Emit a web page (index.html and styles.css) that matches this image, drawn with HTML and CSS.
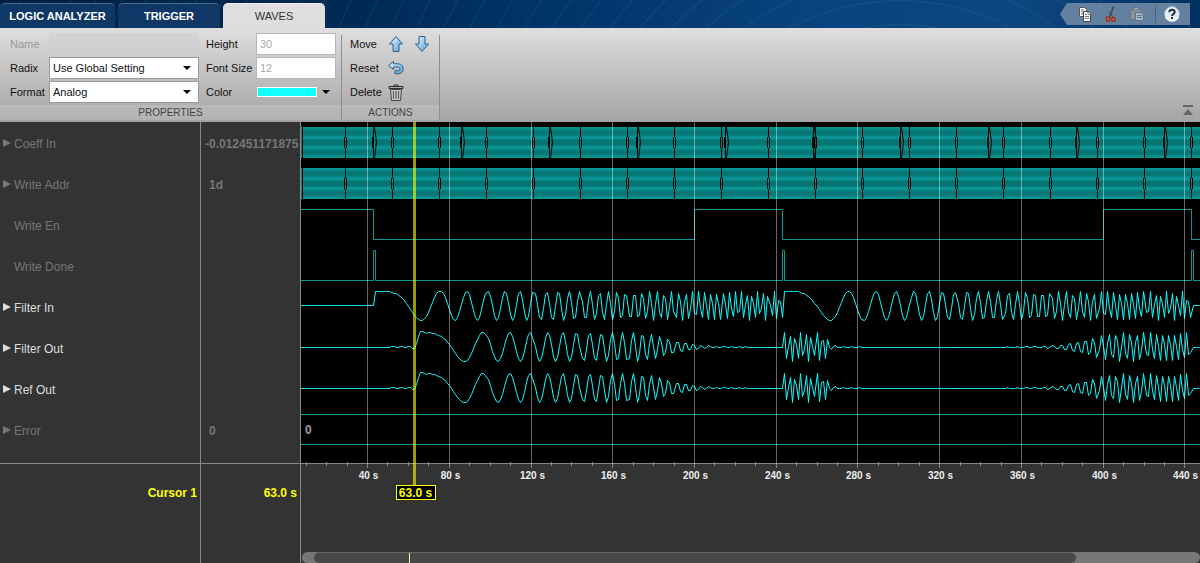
FILE: index.html
```
<!DOCTYPE html>
<html lang="en">
  <head>
    <meta charset="utf-8" />
    <title>Logic Analyzer</title>
    <link rel="stylesheet" href="styles.css">
  </head>
  <body>
    <header class="topbar">
      <nav class="tabs">
        <button class="tab">LOGIC ANALYZER</button>
        <button class="tab">TRIGGER</button>
        <button class="tab active">WAVES</button>
      </nav>
      <div class="quick">
        <button class="icon-btn" aria-label="Copy">
          <svg width="16" height="16" viewBox="0 0 16 16">
            <path d="M2.500 1.500h5l2 2v7h-7z" fill="#fff" stroke="#555" />
            <path d="M4 4h3M4 6h3M4 8h2" stroke="#777" />
            <path d="M6.500 5.500h5l2 2v8h-7z" fill="#fff" stroke="#444" />
            <path d="M11 5.500v3h3M8 8.500h2M8 10.500h4M8 12.500h4" fill="none" stroke="#777" />
          </svg>
        </button>
        <button class="icon-btn" aria-label="Cut">
          <svg width="16" height="16" viewBox="0 0 16 16" fill="none">
            <path d="M10.500 0L8 8l-2 3.500" stroke="#444" stroke-width="1.500" />
            <path d="M5.500 6L8 9l2 2" stroke="#555" stroke-width="1.200" />
            <ellipse cx="5" cy="13" rx="1.800" ry="2.200" stroke="#b03010" stroke-width="1.500" />
            <ellipse cx="10.500" cy="13.500" rx="1.800" ry="2" stroke="#b03010" stroke-width="1.500" />
          </svg>
        </button>
        <button class="icon-btn" aria-label="Paste" disabled>
          <svg width="16" height="16" viewBox="0 0 16 16">
            <path d="M1.500 3.500h11v10h-11z" fill="#8c929b" stroke="#67727f" />
            <path d="M4 4V2h2V1h2v1h2v2z" fill="#a9b5c2" stroke="#67727f" />
            <path d="M6.500 6.500h5l3 2v6h-8z" fill="#a3b4c6" stroke="#60758c" />
            <path d="M8 9.500h5M8 11.500h5" stroke="#60758c" />
          </svg>
        </button>
        <span class="divider"></span>
        <button class="icon-btn" aria-label="Help">
          <svg width="16" height="16" viewBox="0 0 16 16">
            <circle cx="8" cy="8" r="7.500" fill="#e4ebf1" stroke="#9eb4c8" />
            <path d="M2 11a7 7 0 0 0 12 0" fill="none" stroke="#fff" stroke-width="2" />
            <path d="M5.300 6.200c0-3.200 5.400-3.200 5.400-.2 0 2-2.600 1.900-2.600 4" fill="none" stroke="#1c2c3f" stroke-width="2" />
            <path d="M7 11h2v2H7z" fill="#1c2c3f" />
          </svg>
        </button>
      </div>
    </header>

    <section class="ribbon">
      <div class="group">
        <div class="fields">
          <label class="muted" for="name">Name</label>
          <input class="field" type="text" id="name" disabled />
          <label for="height">Height</label>
          <input class="field num" type="text" id="height" value="30" />
          <label for="radix">Radix</label>
          <select class="field" id="radix">
            <option>Use Global Setting</option>
          </select>
          <label for="fontSize">Font Size</label>
          <input class="field num" type="text" id="fontSize" value="12" />
          <label for="format">Format</label>
          <select class="field" id="format">
            <option>Analog</option>
          </select>
          <label for="color">Color</label>
          <button class="color" id="color"><span class="swatch"></span><span class="caret"></span></button>
        </div>
        <div class="group-title">PROPERTIES</div>
      </div>
      <div class="group">
        <div class="actions">
          <span>Move</span>
          <button class="icon-btn" aria-label="Move up">
            <svg width="16" height="18" viewBox="0 0 16 18">
              <path d="M8 1.500L14.500 9H11v7.500H5V9H1.500z" fill="url(#blue)" stroke="#2c5f8c" />
            </svg>
          </button>
          <button class="icon-btn" aria-label="Move down">
            <svg width="16" height="18" viewBox="0 0 16 18">
              <path d="M8 16.500L1.500 9H5V1.500h6V9h3.500z" fill="url(#blue)" stroke="#2c5f8c" />
            </svg>
          </button>
          <span>Reset</span>
          <button class="icon-btn" aria-label="Reset">
            <svg width="16" height="16" viewBox="0 0 16 16">
              <path d="M.5 5.500L5.500 1.500v2.300h4.800c6.500 0 6.500 10 0 10H7v-3h3c2.500 0 2.500-3.800 0-3.800H5.500v2.500z" fill="url(#blue)" stroke="#2c5f8c" />
            </svg>
          </button>
          <span></span>
          <span>Delete</span>
          <button class="icon-btn" aria-label="Delete">
            <svg width="16" height="17" viewBox="0 0 16 17">
              <path d="M6 2V1h4v1" fill="none" stroke="#333" />
              <path d="M2.500 5.500h11l-1 11h-9z" fill="#ccc" stroke="#444" />
              <path d="M1 2.500h14v2H1z" fill="#aaa" stroke="#333" />
              <path d="M5.500 7v8M8 7v8M10.500 7v8" stroke="#666" stroke-width="1.300" />
            </svg>
          </button>
        </div>
        <div class="group-title">ACTIONS</div>
      </div>
      <button class="collapse" aria-label="Collapse ribbon">
        <svg width="12" height="11" viewBox="0 0 12 11" fill="#666">
          <path d="M1 0h10v2H1zM6 4l5 6H1z" />
        </svg>
      </button>
    </section>

    <main class="viewer">
      <div class="names">
        <ul class="signals">
          <li><button class="expand" aria-label="Expand"></button>Coeff In</li>
          <li><button class="expand" aria-label="Expand"></button>Write Addr</li>
          <li class="leaf">Write En</li>
          <li class="leaf">Write Done</li>
          <li class="on"><button class="expand" aria-label="Expand"></button>Filter In</li>
          <li class="on"><button class="expand" aria-label="Expand"></button>Filter Out</li>
          <li class="on"><button class="expand" aria-label="Expand"></button>Ref Out</li>
          <li><button class="expand" aria-label="Expand"></button>Error</li>
        </ul>
        <div class="cursor-info">Cursor 1</div>
      </div>
      <div class="values">
        <ul class="signals">
          <li class="long">-0.012451171875</li>
          <li>1d</li>
          <li></li>
          <li></li>
          <li></li>
          <li></li>
          <li></li>
          <li>0</li>
        </ul>
        <div class="cursor-info">63.0 s</div>
      </div>
      <div class="waves">
        <svg class="plot" id="plot"></svg>
        <div class="track"><div class="thumb"><span class="mark"></span></div></div>
      </div>
    </main>

    <svg class="defs" width="0" height="0">
      <linearGradient id="blue" x1="0" y1="0" x2="1" y2="1">
        <stop offset="0" stop-color="#f0faff" />
        <stop offset="1" stop-color="#4f9bd0" />
      </linearGradient>
    </svg>

    <script src="plot.js"></script>
  </body>
</html>
```
FILE: styles.css
```
* {
  box-sizing: border-box;
}
body {
  margin: 0;
  min-height: 100vh;
  display: flex;
  flex-direction: column;
  font-family: "Liberation Sans", Arial, sans-serif;
  font-size: 11px;
  color: #111;
  background: #333;
}
button,
input,
select {
  font: inherit;
  color: inherit;
}
button {
  padding: 0;
  border: none;
  background: none;
}
.defs {
  position: absolute;
}

/* top bar */
.topbar {
  display: flex;
  justify-content: space-between;
  height: 28px;
  padding: 3px 10px 0 0;
  background:
    repeating-radial-gradient(circle at 75% 240px, transparent 0 22px, rgba(120, 180, 230, 0.08) 23px 24px),
    linear-gradient(90deg, #00203f 0%, #002a55 30%, #003468 45%, #0a4480 70%, #0d467f 85%, #003060 100%);
}
.tabs {
  display: flex;
  gap: 3px;
}
.tab {
  width: 102px;
  border-radius: 5px 5px 0 0;
  border-top: 1px solid #4a6c92;
  background: #0f3866;
  color: #fff;
  font-weight: bold;
}
.tab:first-child {
  width: 115px;
}
.tab.active {
  border-color: #eee;
  background: #dedede;
  color: #333;
  font-weight: normal;
}
.quick {
  display: flex;
  align-items: center;
  gap: 10px;
  width: 130px;
  height: 22px;
  padding-left: 17px;
  background: #63809f;
  clip-path: polygon(0 50%, 7px 0, 100% 0, 100% 100%, 7px 100%);
}
.icon-btn {
  display: flex;
  align-items: center;
  justify-content: center;
  width: 16px;
}
.icon-btn svg {
  flex: none;
}
.divider {
  width: 1px;
  height: 18px;
  margin-right: -2px;
  background: #4a6584;
}

/* ribbon */
.ribbon {
  display: flex;
  height: 94px;
  border-bottom: 2px solid #a4a4a4;
  background: linear-gradient(#dedede, #a5a5a5);
}
.group {
  display: flex;
  flex-direction: column;
  justify-content: space-between;
  width: 98px;
  border-right: 1px solid;
  border-image: linear-gradient(transparent 8%, #8e8e8e 9%) 1;
}
.group:first-child {
  width: 342px;
}
.fields {
  display: grid;
  grid-template-columns: 39px 150px 57px 80px;
  grid-template-rows: repeat(3, 24px);
  align-items: center;
  padding: 4px 5px 0 10px;
}
.fields label:nth-of-type(even) {
  padding-left: 7px;
  white-space: nowrap;
}
.muted {
  color: #999;
}
.field {
  width: 100%;
  height: 22px;
  padding: 0 3px;
  border: 1px solid #999;
  border-radius: 0;
  background: #fff;
}
.field:disabled {
  border-color: transparent;
  background: rgba(205, 205, 205, 0.5);
}
.field.num {
  border-color: #b5b5b5;
  color: #aaa;
}
select.field {
  appearance: none;
  background: #fff url("data:image/svg+xml,%3Csvg xmlns='http://www.w3.org/2000/svg' width='8' height='4'%3E%3Cpath d='M0 0h8L4 4z'/%3E%3C/svg%3E") no-repeat right 7px center;
}
.color {
  display: flex;
  align-items: center;
  gap: 5px;
  padding-left: 1px;
}
.swatch {
  width: 60px;
  height: 10px;
  border: 1px solid #fff;
  background: #1ff;
}
.caret {
  border: 4px solid transparent;
  border-top-color: #000;
  border-bottom: none;
}
.actions {
  display: grid;
  grid-template-columns: 38px 26px 16px;
  grid-template-rows: repeat(3, 24px);
  align-items: center;
  padding: 4px 9px 0 8px;
}
.group-title {
  height: 15px;
  line-height: 15px;
  text-align: center;
  font-size: 10px;
  color: #444;
  background: rgba(255, 255, 255, 0.15);
}
.collapse {
  align-self: flex-end;
  margin: 0 6px 2px auto;
}

/* viewer */
.viewer {
  flex: 1;
  display: flex;
}
.names,
.values {
  color: #777;
  font-size: 12px;
  border-right: 1px solid #888;
}
.names {
  width: 201px;
}
.values {
  width: 100px;
  font-weight: bold;
}
.signals {
  margin: 0;
  padding: 1px 0 12px;
  list-style: none;
  border-bottom: 1px solid #888;
}
.signals li {
  display: flex;
  align-items: center;
  height: 41px;
  padding-left: 3px;
}
.signals .leaf {
  padding-left: 14px;
}
.signals .on {
  color: #ddd;
}
.values li {
  padding-left: 8px;
  overflow: hidden;
  white-space: nowrap;
}
.values .long {
  padding-left: 4px;
}
.expand {
  margin: 0 3px 2px 0;
  border: 4px solid transparent;
  border-left: 8px solid currentColor;
  border-right: none;
}
.cursor-info {
  padding: 22px 3px 0 0;
  text-align: right;
  font-weight: bold;
  color: #ff0;
}
.waves {
  flex: 1;
  min-width: 0;
  display: flex;
  flex-direction: column;
  justify-content: space-between;
}
.plot {
  display: block;
  width: 100%;
  height: 380px;
}
.grid {
  stroke: #fff;
  stroke-opacity: 0.4;
}
.axis {
  stroke: #888;
}
.tick-label {
  fill: #eee;
  font-size: 10px;
  font-weight: bold;
  text-anchor: middle;
}
.analog {
  fill: none;
  stroke: #1ff;
}
.digital {
  fill: none;
  stroke: #0a9896;
}
.gap {
  fill: none;
  stroke: #000;
}
.bus-value {
  fill: #999;
  font-size: 12px;
  font-weight: bold;
}
.cursor-line {
  fill: #ff0;
  fill-opacity: 0.6;
}
.cursor-box {
  fill: #000;
  stroke: #ff0;
}
.cursor-text {
  fill: #ff0;
  font-size: 12px;
  font-weight: bold;
  text-anchor: middle;
}
.track {
  height: 11px;
  margin-left: 1px;
  padding-left: 12px;
  border-radius: 6px;
  background: #777;
}
.thumb {
  width: 86%;
  height: 100%;
  padding-left: 95px;
  border-top: 1px solid #666;
  border-radius: 6px;
  background: #484848;
}
.mark {
  display: block;
  width: 1px;
  height: 100%;
  background: #ff8;
}
```
FILE: plot.js
```
const plot = document.getElementById("plot");
const width = plot.clientWidth;
const plotHeight = 341;
const scale = 2.0435;
const endTime = Math.ceil(width / scale) + 10;

// seconds -> pixels
const px = (t) => t * scale - 15.3;
const snap = (t) => Math.floor(px(t) + 0.1) + 0.5;

const line = (cls, x1, y1, x2, y2) =>
  `<path class="${cls}" d="M${x1} ${y1}L${x2} ${y2}"/>`;

// chirp, restarted every 200 s
function filterIn(t) {
  if (t < 44 || t >= 444) return 0;
  const n = (t - 44) % 200;
  return Math.cos((Math.PI * n * n) / 500);
}

// half band FIR, low pass first and high pass after 243 s
const taps = 43;
const mid = (taps - 1) / 2;
function coeff(k, highPass) {
  const m = k - mid;
  const sinc = m === 0 ? 0.5 : Math.sin((Math.PI * m) / 2) / (Math.PI * m);
  const win = 0.54 - 0.46 * Math.cos((2 * Math.PI * k) / (taps - 1));
  return highPass ? (m === 0 ? 1 : 0) - sinc * win : sinc * win;
}
function filterOut(t) {
  if (t >= 444) return 0;
  let sum = 0;
  for (let k = 0; k < taps; k++) {
    sum += coeff(k, t > 243) * filterIn(t - k);
  }
  return sum;
}

function analog(fn, y) {
  const points = [];
  for (let t = 7; t < endTime; t++) {
    points.push(`${Math.floor(px(t)) + 0.5},${Math.floor(y - fn(t) * 14.6) + 0.5}`);
  }
  return `<polyline class="analog" points="${points.join(" ")}"/>`;
}

function bus(y) {
  return `<rect x="0" y="${y}" width="${width}" height="31" fill="url(#bus)"/>`;
}
function crossing(x, y) {
  return (
    line("gap", x, y, x, y + 10) +
    line("gap", x - 1, y + 10, x - 1, y + 21) +
    line("gap", x + 1, y + 10, x + 1, y + 21) +
    line("gap", x, y + 21, x, y + 31)
  );
}
function wideCrossing(x, y) {
  return (
    line("gap", x, y, x, y + 31) +
    `<path class="gap" d="M${x - 1} ${y + 10}V${y + 21}M${x + 1} ${y}l2 15.500l-2 15.500"/>`
  );
}

let svg = `
  <linearGradient id="bus" x1="0" y1="0" x2="0" y2="1">
    <stop offset="0" stop-color="#0a9b99"/>
    <stop offset="0.16" stop-color="#067472"/>
    <stop offset="0.26" stop-color="#067d7b"/>
    <stop offset="0.34" stop-color="#0a9b99"/>
    <stop offset="0.44" stop-color="#067472"/>
    <stop offset="0.56" stop-color="#067472"/>
    <stop offset="0.66" stop-color="#0a9b99"/>
    <stop offset="0.74" stop-color="#067d7b"/>
    <stop offset="0.84" stop-color="#067472"/>
    <stop offset="1" stop-color="#0a9b99"/>
  </linearGradient>
  <rect width="${width}" height="${plotHeight}" fill="#000"/>`;

// buses
svg += bus(5) + bus(46);
svg += line("gap", 1.5, 5, 1.5, 77);
for (let t = 29; t < endTime; t += 23) {
  svg += crossing(snap(t), 5) + crossing(snap(t), 46);
}
for (let t = 43; t < endTime; t += 43) {
  svg += wideCrossing(snap(t), 5);
}

// digital signals
svg += `<path class="digital" d="M0 87.500H${snap(43)}V117.500H${snap(200)}V87.500H${snap(243)}V117.500H${snap(400)}V87.500H${snap(443)}V117.500H${width}"/>`;
let done = "M0 158.500";
for (const t of [43, 243, 443]) {
  done += `H${snap(t)}V128.500H${snap(t) + 2}V158.500`;
}
svg += `<path class="digital" d="${done}H${width}"/>`;
svg += line("digital", 0, 292.5, width, 292.5);
svg += line("digital", 0, 322.5, width, 322.5);
svg += `<text class="bus-value" x="4" y="312">0</text>`;

// analog signals
svg += analog(filterIn, 183.8);
svg += analog(filterOut, 225.05);
svg += analog(filterOut, 266.05);

// time axis
svg += line("axis", 0, 341.5, width, 341.5);
for (let t = 10; px(t) < width; t += 10) {
  if (t % 40 === 0) {
    svg += line("grid", snap(t), 0, snap(t), 346);
    svg += `<text class="tick-label" x="${snap(t) + 1}" y="357">${t} s</text>`;
  } else {
    svg += line("axis", snap(t), 340, snap(t), 344);
  }
}

// cursor
const cx = snap(63);
svg += `<rect class="cursor-line" x="${cx - 1.5}" y="0" width="3" height="363"/>`;
svg += `<rect class="cursor-box" x="${cx - 18}" y="363.500" width="39" height="14"/>`;
svg += `<text class="cursor-text" x="${cx + 1}" y="375">63.0 s</text>`;

plot.innerHTML = svg;
```
